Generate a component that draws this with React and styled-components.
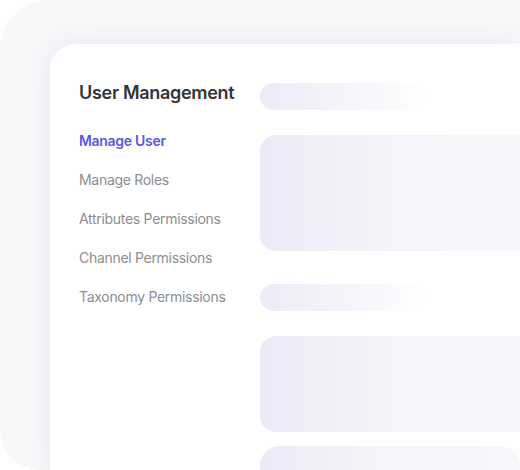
import React from 'react';
import styled, { createGlobalStyle } from 'styled-components';

const menuItems = [
  'Manage User',
  'Manage Roles',
  'Attributes Permissions',
  'Channel Permissions',
  'Taxonomy Permissions',
];

export default function App() {
  return (
    <>
      <GlobalStyle />
      <Backdrop>
        <Card>
          <Sidebar>
            <Title>User Management</Title>
            <Menu>
              {menuItems.map((item, i) => (
                <MenuItem key={item} $active={i === 0}>
                  {item}
                </MenuItem>
              ))}
            </Menu>
          </Sidebar>
          <Content>
            <Pill />
            <Block $height={116} $gap={33} $bleed />
            <Pill />
            <Block $height={96} $gap={14} $bleed />
            <Block $height={60} $radius={20} />
          </Content>
        </Card>
      </Backdrop>
    </>
  );
}

const GlobalStyle = createGlobalStyle`
  html, body {
    margin: 0;
    padding: 0;
    background: #fff;
    overflow: hidden;
    font-family: Inter, "Noto Sans", sans-serif;
  }
`;

const Backdrop = styled.div`
  width: 520px;
  height: 470px;
  box-sizing: border-box;
  padding: 44px 0 0 50px;
  background: #f8f8f9;
  border-radius: 50px 0 0 40px;
  display: flex;
  overflow: hidden;
`;

const Card = styled.div`
  flex: 1;
  background: #fff;
  border-radius: 26px 0 0 0;
  box-shadow: 0 0 28px rgba(120, 110, 210, 0.13);
  display: flex;
  padding: 36px 0 0 29px;
  box-sizing: border-box;
  overflow: hidden;
`;

const Sidebar = styled.div`
  width: 181px;
  flex-shrink: 0;
  display: flex;
  flex-direction: column;
`;

const Title = styled.h2`
  margin: 0;
  font-size: 18px;
  line-height: 26px;
  font-weight: 600;
  color: #333338;
  letter-spacing: -0.3px;
`;

const Menu = styled.ul`
  list-style: none;
  margin: 15px 0 0;
  padding: 0;
`;

const MenuItem = styled.li`
  font-size: 14px;
  line-height: 39px;
  font-weight: ${p => (p.$active ? 600 : 400)};
  color: ${p => (p.$active ? '#5b57e0' : '#8d8d92')};
  letter-spacing: -0.3px;
`;

const Content = styled.div`
  flex: 1;
  min-width: 0;
  display: flex;
  flex-direction: column;
  padding-top: 3px;
`;

const Pill = styled.div`
  flex-shrink: 0;
  width: 166px;
  height: 27px;
  border-radius: 14px;
  margin-bottom: 25px;
  background: linear-gradient(90deg, #ececf8 0%, #f5f5fb 55%, #ffffff 100%);
`;

const Block = styled.div`
  flex-shrink: 0;
  height: ${p => p.$height}px;
  margin-bottom: ${p => p.$gap || 0}px;
  margin-right: ${p => (p.$bleed ? '-40px' : '0')};
  border-radius: ${p => p.$radius || 16}px;
  background: linear-gradient(90deg, #ebebf8 0%, #f4f4fa 45%, #f8f8fb 100%);
`;
